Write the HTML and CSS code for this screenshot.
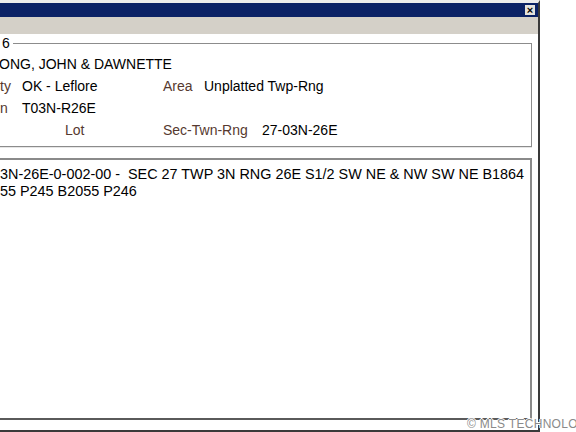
FILE: index.html
```html
<!DOCTYPE html>
<html>
<head>
<meta charset="utf-8">
<link rel="stylesheet" href="styles.css">
</head>
<body>
<div class="window">
  <div class="titlebar"><span class="close">×</span></div>
  <div class="toolbar"></div>
  <div class="content">
    <fieldset class="group">
      <legend>6</legend>
      <div class="name">ONG, JOHN &amp; DAWNETTE</div>
      <div class="grid">
        <span class="lbl c1">ty</span>
        <span class="val c2">OK - Leflore</span>
        <span class="lbl c4">Area</span>
        <span class="val c5">Unplatted Twp-Rng</span>

        <span class="lbl c1">n</span>
        <span class="val c2">T03N-R26E</span>

        <span class="lbl c3">Lot</span>
        <span class="lbl c4b">Sec-Twn-Rng</span>
        <span class="val c6">27-03N-26E</span>
      </div>
    </fieldset>
    <div class="legal">3N-26E-0-002-00 -&nbsp; SEC 27 TWP 3N RNG 26E S1/2 SW NE &amp; NW SW NE B1864<br>55 P245 B2055 P246</div>
  </div>
</div>
<div class="watermark">© MLS TECHNOLOGY</div>
</body>
</html>
```

FILE: styles.css
```css
html, body {
  margin: 0;
  padding: 0;
}
body {
  width: 576px;
  height: 432px;
  overflow: hidden;
  background: #ffffff;
  font-family: "Liberation Sans", Arial, sans-serif;
  font-size: 14px;
  color: #000;
  position: relative;
}
.window {
  box-sizing: border-box;
  width: 540px;
  height: 432px;
  border-top: 3px solid #ececec;
  border-right: 2px solid #3a3a3a;
  border-bottom: 2px solid #3a3a3a;
  display: flex;
  flex-direction: column;
}
.titlebar {
  height: 14px;
  background: #0b2266;
  display: flex;
  justify-content: flex-end;
  align-items: center;
  padding-right: 3px;
}
.close {
  width: 10px;
  height: 10px;
  background: #e4e2dc;
  color: #000;
  font-size: 11px;
  line-height: 10px;
  text-align: center;
  font-weight: bold;
}
.toolbar {
  height: 17px;
  background: #d4d0c8;
}
.content {
  flex: 1;
  display: flex;
  flex-direction: column;
  padding-right: 6px;
  background: #fff;
}
.group {
  margin: 1px 0 0 0;
  padding: 2px 0 5px 0;
  border: 1px solid #8c8c8c;
  border-left: none;
  box-shadow: 0 1px 0 #e6e6e6;
}
.group legend {
  padding: 0 3px 0 2px;
  margin-left: 0;
  line-height: 16px;
}
.name {
  line-height: 22px;
  margin-left: -1px;
  white-space: nowrap;
}
.grid {
  display: grid;
  grid-template-columns: 22px 43px 98px 41px 58px auto;
  grid-auto-rows: 22px;
  line-height: 22px;
  white-space: nowrap;
}
.lbl { color: #56392f; }
.c1 { grid-column: 1; }
.c2 { grid-column: 2 / 4; }
.c3 { grid-column: 3; }
.c4 { grid-column: 4; }
.c4b { grid-column: 4 / 6; }
.c5 { grid-column: 5 / 7; }
.c6 { grid-column: 6; }
.legal {
  box-sizing: border-box;
  margin-top: 11px;
  height: 262px;
  border: 2px solid #8a8a8a;
  border-left: none;
  border-bottom-color: #5a5a5a;
  padding-top: 6px;
  font-size: 14.4px;
  line-height: 17px;
  white-space: nowrap;
}
.watermark {
  position: absolute;
  left: 467px;
  top: 417px;
  font-size: 12px;
  line-height: 14px;
  letter-spacing: 0.3px;
  color: #8a8a8a;
  white-space: nowrap;
  text-shadow: 1px 0 0 #fff, -1px 0 0 #fff, 0 1px 0 #fff, 0 -1px 0 #fff;
}
```
